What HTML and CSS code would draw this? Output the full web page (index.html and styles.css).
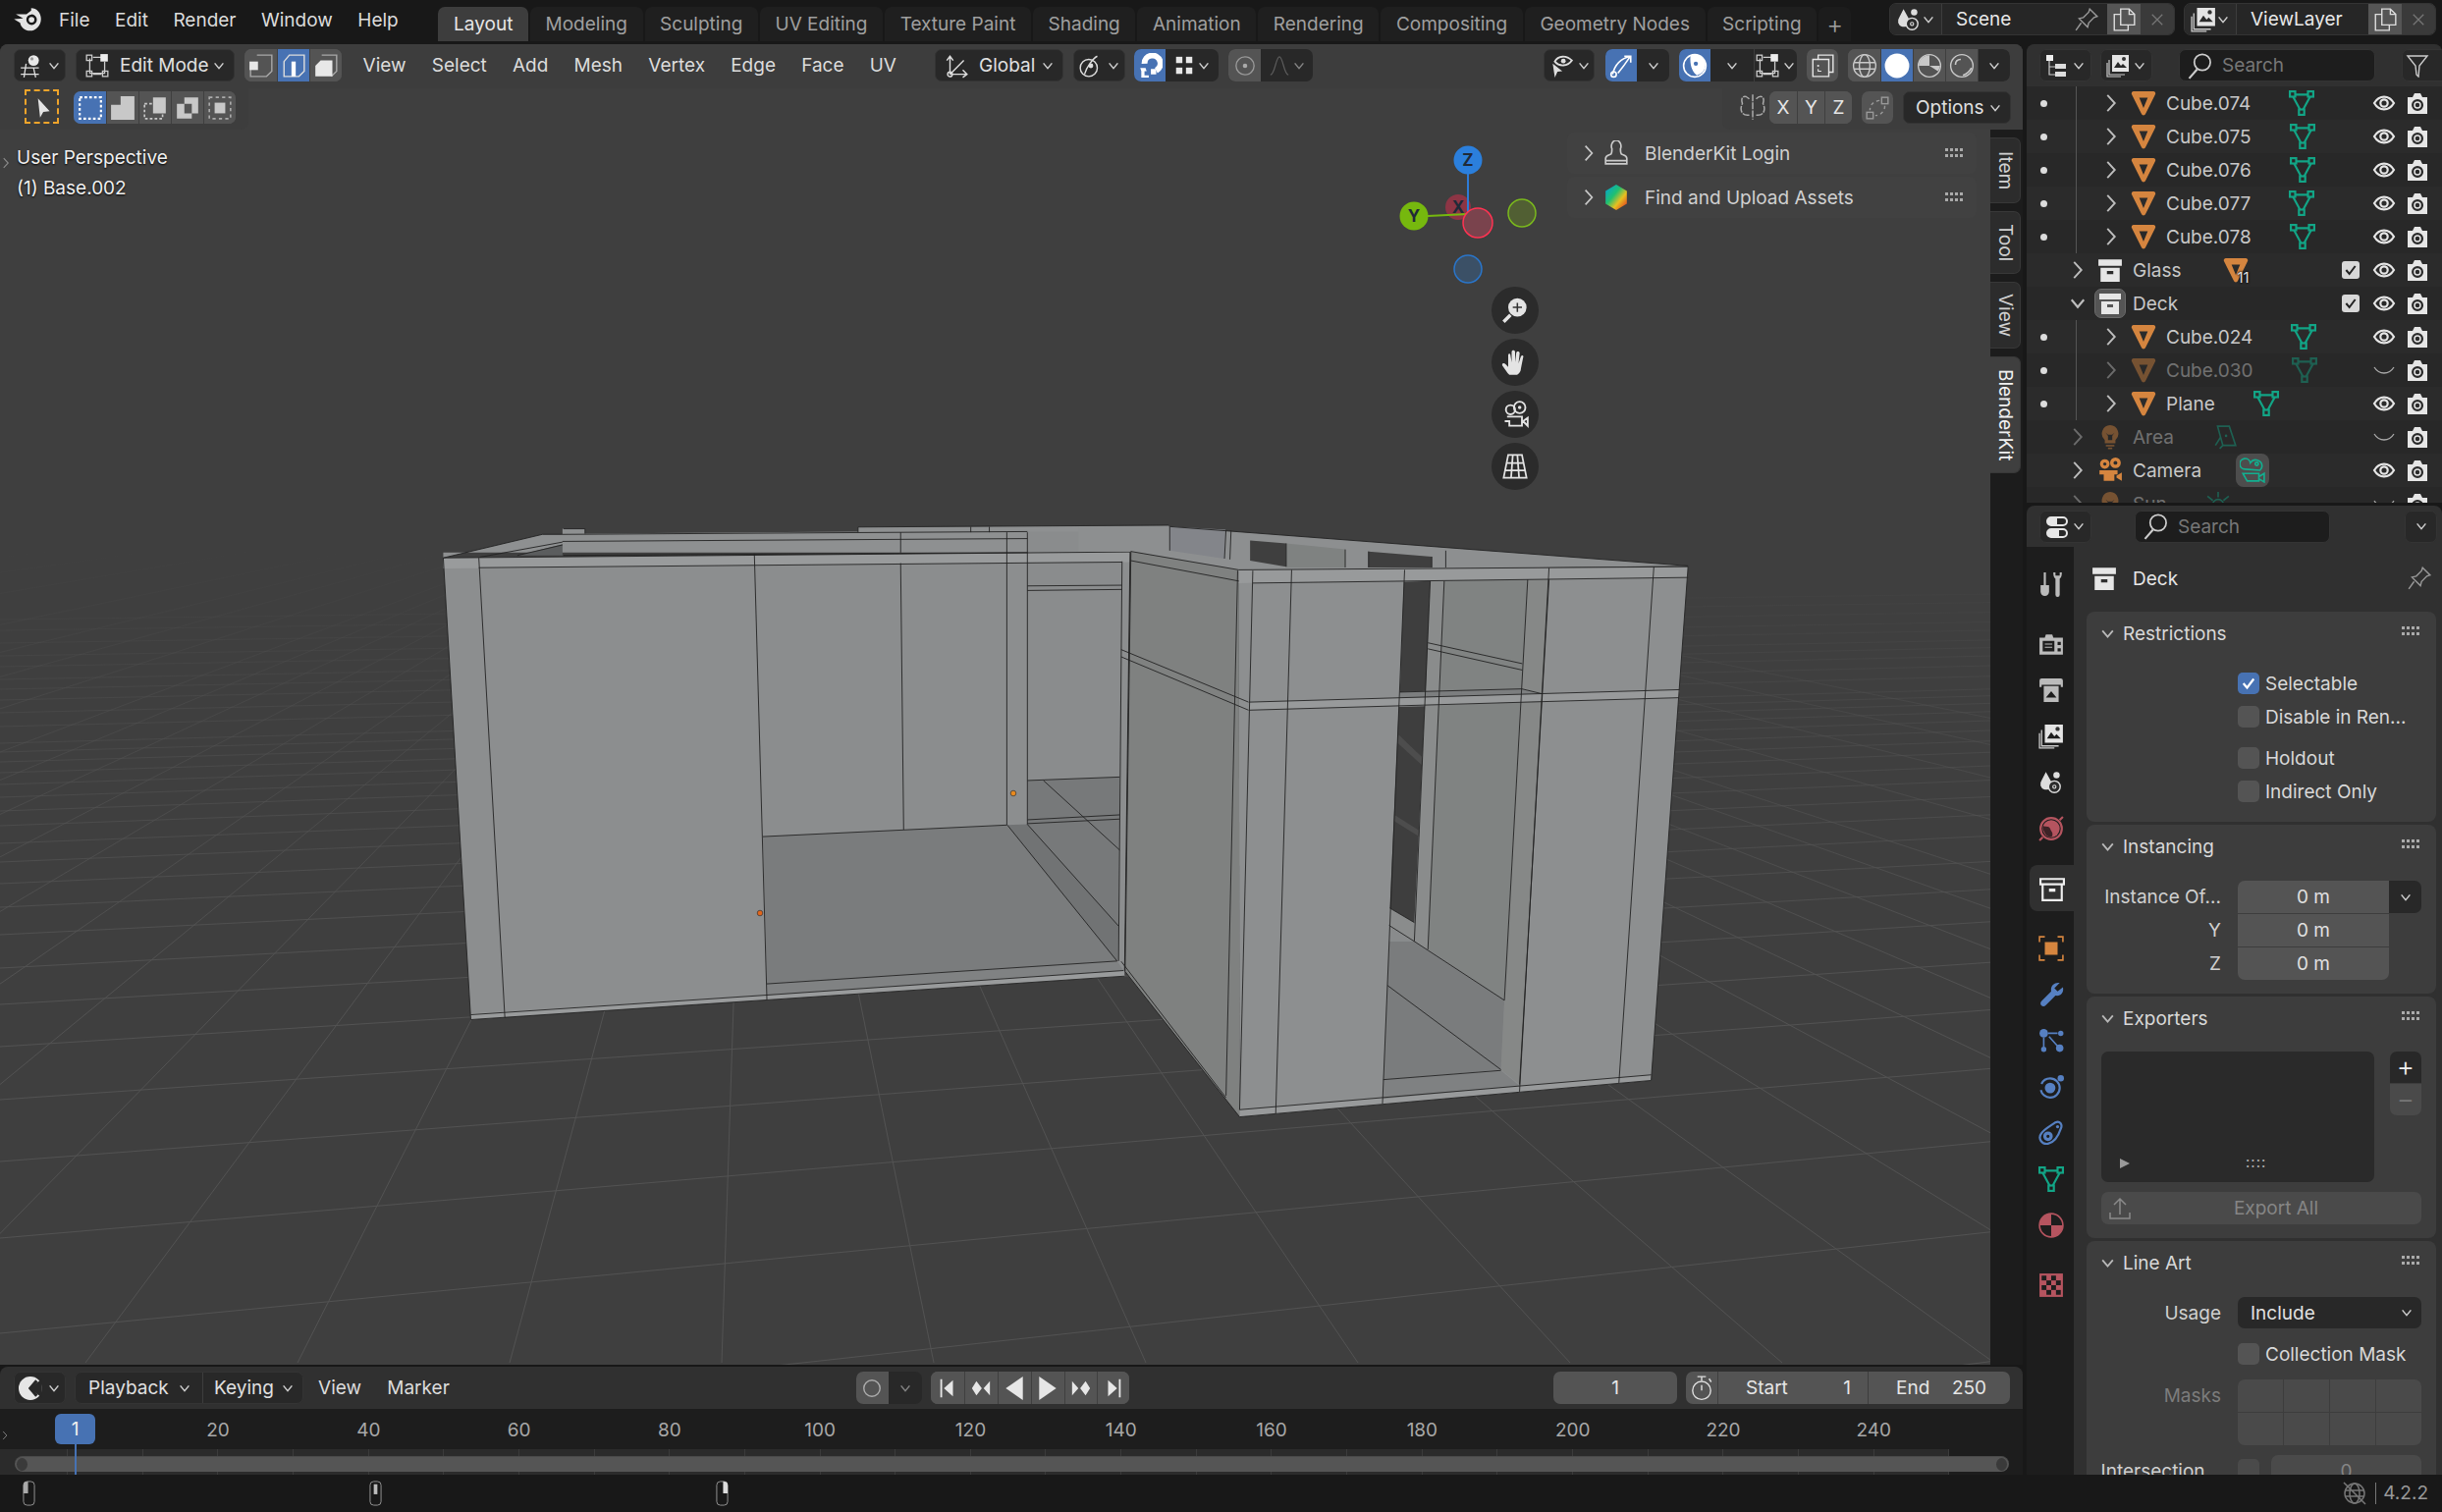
FILE: index.html
```html
<!DOCTYPE html>
<html lang="en">
<head>
<meta charset="utf-8">
<title>Blender 4.2.2</title>
<link rel="stylesheet" href="styles.css">
</head>
<body>
<svg class="defs" aria-hidden="true">
<defs>
<symbol id="logo" viewBox="0 0 24 24"><path fill="#e4e4e4" fill-rule="evenodd" d="M15 2.500c4.500 0 8 3.900 8 8.800 0 5.300-4 9.700-9 9.700-4.100 0-7.400-2.800-8-6.500L1 11.500 8.500 11 2.500 7.500h8.700L15 4.500zM15.300 7.700a4.300 4.300 0 1 0 .1 8.600 4.300 4.300 0 0 0-.1-8.600z"/><circle cx="15.300" cy="12" r="2.300" fill="#e4e4e4"/></symbol>
<symbol id="view3d" viewBox="0 0 24 24"><g fill="none" stroke="currentColor" stroke-width="1.200"><path d="M2 14h17M2 20h17M7 10l-2 13M14 14l2 9"/></g><circle cx="14" cy="7" r="5" fill="#e8e8e8"/><circle cx="12.500" cy="5.500" r="1.500" fill="#999"/></symbol>
<symbol id="editmode" viewBox="0 0 24 24"><g fill="none" stroke="#ccc" stroke-width="1.200"><path d="M5 5v14h14V8M8 4h8M8 20h8"/><rect x="2" y="2" width="5" height="5"/><rect x="2" y="17" width="5" height="5"/><rect x="17" y="17" width="5" height="5"/></g><rect x="15" y="1" width="7" height="7" fill="#eee"/></symbol>
<symbol id="vertsel" viewBox="0 0 24 24"><path fill="none" stroke="#a8a8a8" stroke-width="1.300" d="M8 2h14v15l-5 5H2V12"/><rect x="1" y="8" width="8" height="8" fill="#e8e8e8"/></symbol>
<symbol id="edgesel" viewBox="0 0 24 24"><path fill="none" stroke="#ddd" stroke-width="1.300" d="M8 2h14v15l-5 5H3V8z"/><rect x="10" y="8" width="4" height="14" fill="#fff"/></symbol>
<symbol id="facesel" viewBox="0 0 24 24"><path fill="none" stroke="#a8a8a8" stroke-width="1.300" d="M8 2h14v15l-5 5"/><path fill="#e8e8e8" d="M7 7h11v15H2V12z"/></symbol>
<symbol id="cursor" viewBox="0 0 24 24"><path fill="#e4e4e4" d="M8 4l11 12-6 .5L10 22z"/></symbol>
<symbol id="boxnew" viewBox="0 0 24 24"><rect x="2" y="2" width="20" height="20" fill="none" stroke="#fff" stroke-width="2" stroke-dasharray="2.500 2"/></symbol>
<symbol id="boxadd" viewBox="0 0 24 24"><path fill="#c8c8c8" d="M10 1h13v22H1V9h9z"/></symbol>
<symbol id="boxsub" viewBox="0 0 24 24"><path fill="#c8c8c8" d="M10 2h12v15H10z"/><rect x="2" y="8" width="17" height="14" fill="none" stroke="#c8c8c8" stroke-width="1.500" stroke-dasharray="2.500 2"/></symbol>
<symbol id="boxxor" viewBox="0 0 24 24"><path fill="#c8c8c8" fill-rule="evenodd" d="M9 2h13v15h-6v5H2V8h7zM9 8v9h7V8z"/></symbol>
<symbol id="boxand" viewBox="0 0 24 24"><rect x="2" y="2" width="20" height="20" fill="none" stroke="#aaa" stroke-width="1.500" stroke-dasharray="3 3"/><rect x="7" y="7" width="10" height="10" fill="#c8c8c8"/></symbol>
<symbol id="global" viewBox="0 0 24 24"><g fill="none" stroke="#ddd" stroke-width="1.300"><path d="M6 20V4M3 7l3-4 3 4M6 20h16M18 16l4 4-4 3M6 20L19 7"/><circle cx="6" cy="20" r="2.200"/></g></symbol>
<symbol id="pivot" viewBox="0 0 24 24"><g fill="none" stroke="#ddd" stroke-width="1.300"><circle cx="10" cy="14" r="8"/><path d="M18 3c-4 2-10 10-12 17"/></g><circle cx="12" cy="12" r="2.200" fill="#ddd"/></symbol>
<symbol id="magnet" viewBox="0 0 24 24"><path fill="none" stroke="#fff" stroke-width="5.500" d="M7 10a7.500 7.500 0 1 1 11 6.500"/><path fill="#fff" d="M3 14h5l1 3H7v4h4v2H4v-6z"/><path fill="#fff" d="M13 15h5v5h-5z"/></symbol>
<symbol id="snapgrid" viewBox="0 0 24 24"><g fill="#e8e8e8"><rect x="3" y="2" width="7" height="7"/><rect x="14" y="2" width="7" height="7"/><rect x="3" y="14" width="7" height="7"/><rect x="14" y="14" width="7" height="7"/></g></symbol>
<symbol id="prop" viewBox="0 0 24 24"><circle cx="12" cy="12" r="10" fill="none" stroke="#999" stroke-width="1.500"/><circle cx="12" cy="12" r="2.500" fill="#aaa"/></symbol>
<symbol id="falloff" viewBox="0 0 24 24"><path fill="none" stroke="#888" stroke-width="1.300" d="M2 22c5 0 6-20 10-20s5 20 10 20"/></symbol>
<symbol id="visi" viewBox="0 0 24 24"><path fill="none" stroke="#ddd" stroke-width="1.800" d="M6 8c3-6 11-6 16-1-4 6-12 6-16 1z"/><circle cx="14" cy="7.500" r="2.200" fill="#ddd"/><path fill="#ddd" d="M4 10l9 7-4.500.5L6 23z"/></symbol>
<symbol id="gizmo" viewBox="0 0 24 24"><g fill="none" stroke="#fff" stroke-width="1.500"><path d="M4 20C6 11 12 5 21 3M9 19C13 14 16 10 20 4M15 3h6v6"/><circle cx="5" cy="20" r="2.500"/></g></symbol>
<symbol id="overlay" viewBox="0 0 24 24"><circle cx="12" cy="12" r="10.500" fill="none" stroke="#fff" stroke-width="1.500"/><path fill="#fff" d="M8 2a10 10 0 0 1 14 10 10 10 0 0 1-8 9c-4-3-7-9-6-19z"/><circle cx="13" cy="10" r="2" fill="#4772b3"/></symbol>
<symbol id="xray" viewBox="0 0 24 24"><path fill="none" stroke="#e6e6e6" stroke-width="1.300" d="M8 6V2h14v16h-4M3 6h15v16H3z"/><circle cx="8" cy="12" r="1" fill="#e6e6e6"/><path stroke="#e6e6e6" fill="none" d="M8 15v2h3"/></symbol>
<symbol id="wire" viewBox="0 0 24 24"><g fill="none" stroke="#c8c8c8" stroke-width="1.300"><circle cx="12" cy="12" r="10.500"/><ellipse cx="12" cy="12" rx="5" ry="10.500"/><path d="M2 9h20M2 15h20"/></g></symbol>
<symbol id="solid" viewBox="0 0 24 24"><circle cx="12" cy="12" r="11.500" fill="#fff"/></symbol>
<symbol id="material" viewBox="0 0 24 24"><circle cx="12" cy="12" r="10.500" fill="none" stroke="#c8c8c8" stroke-width="1.300"/><path fill="#c8c8c8" d="M12 2A10 10 0 0 0 2 12h10l8 5a10 10 0 0 0 2-5H12z"/></symbol>
<symbol id="rendered" viewBox="0 0 24 24"><circle cx="12" cy="12" r="10.500" fill="none" stroke="#c8c8c8" stroke-width="1.300"/><path fill="none" stroke="#c8c8c8" stroke-width="1.500" d="M6 11c0-3 2-5 5-5M21 14c-2 4-5 6-8 7"/></symbol>
<symbol id="scene" viewBox="0 0 24 24"><path fill="#ddd" d="M7 2l5 9a5.500 5.500 0 0 1-2 7 5.500 5.500 0 0 1-8-3 6 6 0 0 1 1-5z"/><circle cx="17" cy="5" r="3" fill="#ddd"/><circle cx="15" cy="16" r="5.500" fill="#2b2b2b" stroke="#ddd" stroke-width="1.300"/><circle cx="15" cy="16" r="1.500" fill="none" stroke="#ddd"/></symbol>
<symbol id="pin" viewBox="0 0 24 24"><path fill="none" stroke="#999" stroke-width="1.300" d="M15 2l7 7-3 1-5 5-1 4-8-8 4-1 5-5zM7 15l-5 7"/></symbol>
<symbol id="copy" viewBox="0 0 24 24"><path fill="none" stroke="#ddd" stroke-width="1.300" d="M9 17V2h8l5 5v10zM17 2v5h5M9 7H3v15h13v-5"/></symbol>
<symbol id="close" viewBox="0 0 24 24"><path stroke="#777" stroke-width="1.600" d="M5 5l14 14M19 5L5 19"/></symbol>
<symbol id="layers" viewBox="0 0 24 24"><g fill="none" stroke="#ccc" stroke-width="1.200"><path d="M3 6v15h16M1 9v14h14"/></g><path fill="#e4e4e4" fill-rule="evenodd" d="M6 1h17v17H6zM8 14l4-6 3 4 2-2 4 4z"/><circle cx="18" cy="5" r="2" fill="#333"/></symbol>
<symbol id="outdisp" viewBox="0 0 24 24"><rect x="1" y="1" width="7" height="6" fill="#eee"/><path fill="none" stroke="#ccc" stroke-width="1.200" d="M4 7v14h6M4 13h6"/><rect x="10" y="10" width="11" height="5" fill="#ddd"/><rect x="10" y="18" width="11" height="5" fill="#ddd"/></symbol>
<symbol id="search" viewBox="0 0 24 24"><circle cx="14.500" cy="9" r="7" fill="none" stroke="#ccc" stroke-width="1.500"/><path stroke="#ccc" stroke-width="1.800" d="M10 15l-7 8"/></symbol>
<symbol id="filter" viewBox="0 0 24 24"><path fill="none" stroke="#ccc" stroke-width="1.400" d="M2 2h20l-8 10-1 11-2-2-1-9z"/></symbol>
<symbol id="meshobj" viewBox="0 0 24 24"><path fill="#d5853f" fill-rule="evenodd" d="M3 1h18a2 2 0 0 1 2 3l-9 18c-1 2-3 2-4 0L1 4a2 2 0 0 1 2-3zM8 7l4 9.500L16 7z"/></symbol>
<symbol id="meshdata" viewBox="0 0 24 24"><g fill="none" stroke="currentColor" stroke-width="2"><path d="M6 4h12M4 6l6.500 12M20 6l-6.500 12"/><rect x="1" y="1" width="5" height="5"/><rect x="18" y="1" width="5" height="5"/><rect x="9.500" y="18" width="5" height="5"/></g></symbol>
<symbol id="eye" viewBox="0 0 24 24"><path fill="none" stroke="#e6e6e6" stroke-width="2.200" d="M2 12c5-8.500 15-8.500 20 0-5 8.500-15 8.500-20 0z"/><circle cx="12" cy="12" r="3.700" fill="none" stroke="#e6e6e6" stroke-width="2.200"/></symbol>
<symbol id="eyeoff" viewBox="0 0 24 24"><path fill="none" stroke="#aaa" stroke-width="1.300" d="M2 9c5 8 15 8 20 0"/></symbol>
<symbol id="rcam" viewBox="0 0 24 24"><path fill="#e6e6e6" fill-rule="evenodd" d="M2 6h5l2-4h6l2 4h5v17H2zM12 8a6 6 0 1 0 .1 12A6 6 0 0 0 12 8z"/><circle cx="12" cy="14" r="3" fill="none" stroke="#e6e6e6" stroke-width="1.500"/></symbol>
<symbol id="check" viewBox="0 0 24 24"><path fill="none" stroke="currentColor" stroke-width="3" d="M5 12l5 6L19 6"/></symbol>
<symbol id="coll" viewBox="0 0 24 24"><path fill="#e6e6e6" fill-rule="evenodd" d="M1 2h22v6H1zM3 10h18v13H3zM9 13v3h6v-3z"/></symbol>
<symbol id="collout" viewBox="0 0 24 24"><path fill="none" stroke="#eee" stroke-width="2" d="M1 3h22v5H1zM3 8h18v15H3z"/><rect x="9" y="12" width="6" height="3" fill="#eee"/></symbol>
<symbol id="light" viewBox="0 0 24 24"><path fill="#d5853f" fill-rule="evenodd" d="M12 1a8 8 0 0 1 5 14v3H7v-3a8 8 0 0 1 5-14zM8 8l2 3v4h4v-4l2-3-2 2h-4z"/><rect x="8" y="19.500" width="8" height="1.500" fill="#d5853f"/><rect x="10" y="22" width="4" height="1.500" fill="#d5853f"/></symbol>
<symbol id="areadata" viewBox="0 0 24 24"><path fill="none" stroke="#12a586" stroke-width="1.500" d="M5 2h11l6 18H10zM10 20l-3 3M8 12l-5 8"/><circle cx="13" cy="11" r="1.200" fill="#12a586"/></symbol>
<symbol id="camobj" viewBox="0 0 24 24"><circle cx="7" cy="6" r="4.500" fill="#d5853f"/><circle cx="17" cy="5" r="5" fill="#d5853f"/><circle cx="7" cy="6" r="1.500" fill="#2b2b2b"/><circle cx="17" cy="5" r="1.800" fill="#2b2b2b"/><path fill="#d5853f" d="M2 12h17v4h-3v6H6v-6H2zM18 17l5-3v8l-5-3z"/></symbol>
<symbol id="camdata" viewBox="0 0 24 24"><g fill="none" stroke="#12b090" stroke-width="1.500"><path d="M5 11a5 5 0 1 1 5-6 6 6 0 0 1 11 3c0 2-1 3-2 4z"/><circle cx="16" cy="6" r="1.500"/><path d="M3 15h15v7H7zM18 18l5-3v8l-5-3"/></g></symbol>
<symbol id="sun" viewBox="0 0 24 24"><g fill="none" stroke="#12a586" stroke-width="1.500"><circle cx="12" cy="13" r="5"/><path d="M12 1v5M2 5l5 4M22 5l-5 4M1 14h5M18 14h5M5 22l3-4M19 22l-3-4"/></g></symbol>
<symbol id="sym" viewBox="0 0 24 24"><path fill="none" stroke="#aaa" stroke-width="1.300" stroke-dasharray="6 1" d="M12 1v22M9 5C5 1 1 3 3 9c-3 6 0 11 6 10M15 5c4-4 8-2 6 4 3 6 0 11-6 10"/></symbol>
<symbol id="autofill" viewBox="0 0 24 24"><g fill="none" stroke="#999" stroke-width="1.300"><rect x="16" y="2" width="6" height="6"/><rect x="2" y="16" width="6" height="6"/><path stroke-dasharray="3 3" d="M14 5C8 6 5 9 5 14M19 10c0 5-4 9-9 9"/></g></symbol>
<symbol id="grip" viewBox="0 0 20 10"><g fill="#aaa"><rect x="0" y="0" width="3" height="3"/><rect x="5" y="0" width="3" height="3"/><rect x="10" y="0" width="3" height="3"/><rect x="15" y="0" width="3" height="3"/><rect x="0" y="6" width="3" height="3"/><rect x="5" y="6" width="3" height="3"/><rect x="10" y="6" width="3" height="3"/><rect x="15" y="6" width="3" height="3"/></g></symbol>
<symbol id="user" viewBox="0 0 24 24"><path fill="none" stroke="#ccc" stroke-width="1.500" d="M8 8a4.500 5.500 0 1 1 8 0c0 3 0 4 1 5 2 1 5 1 5 4v5H2v-5c0-3 3-3 5-4 1-1 1-2 1-5zM2 19h20"/></symbol>
<linearGradient id="rainbow" x1="0" y1="0" x2="1" y2="1"><stop offset="0" stop-color="#00a0e0"/><stop offset=".4" stop-color="#20c070"/><stop offset=".65" stop-color="#e8c020"/><stop offset="1" stop-color="#e02020"/></linearGradient>
<symbol id="hex" viewBox="0 0 24 24"><path fill="url(#rainbow)" d="M12 0l10 6v12l-10 6-10-6V6z"/></symbol>
<symbol id="zoomin" viewBox="0 0 24 24"><circle cx="14" cy="9.500" r="8" fill="#e4e4e4"/><path stroke="#e4e4e4" stroke-width="3" d="M8 16l-6 6"/><path stroke="#333" stroke-width="1.300" d="M14 5.500v8M10 9.500h8"/></symbol>
<symbol id="hand" viewBox="0 0 24 24"><path fill="#e4e4e4" d="M7 23c-2-2-4-5-6-8-1-2 1-3 3-1l2 2V6c0-2 2-2 2 0l1 6V3c0-2 3-2 3 0v9l1-8c0-2 3-2 3 0l-1 9 2-6c1-2 3-1 2 1l-2 10c0 2-2 5-4 5z"/></symbol>
<symbol id="navcam" viewBox="0 0 24 24"><g fill="none" stroke="#e4e4e4" stroke-width="1.600"><circle cx="8" cy="8" r="4"/><circle cx="16" cy="6" r="5"/><path d="M5 14h13v8H7v-4H3M19 18l4-3v7z"/></g><circle cx="16" cy="6" r="1.500" fill="#e4e4e4"/></symbol>
<symbol id="ortho" viewBox="0 0 24 24"><g fill="none" stroke="#e4e4e4" stroke-width="1.500"><path d="M6 2h12l4 20H2zM4 9h16M3 15.500h18M10 2L8.500 22M14 2l1.500 20"/></g></symbol>
<symbol id="clock" viewBox="0 0 24 24"><circle cx="11" cy="12" r="11" fill="#e6e6e6"/><path fill="none" stroke="#282828" stroke-width="3" d="M17 5l-6 7 6 7"/><path fill="#282828" d="M22 3v18l-11-9z"/></symbol>
<symbol id="jumpstart" viewBox="0 0 24 24"><path fill="#e6e6e6" d="M4 2h2v20H4zM18 3v18L8 12z"/></symbol>
<symbol id="keyprev" viewBox="0 0 24 24"><path fill="#e6e6e6" d="M7 4l6 8-6 8-5-8zM22 4v16l-7-8z"/></symbol>
<symbol id="playrev" viewBox="0 0 24 24"><path fill="#e6e6e6" d="M20 1v22L4 12z"/></symbol>
<symbol id="play" viewBox="0 0 24 24"><path fill="#e6e6e6" d="M4 1v22l16-11z"/></symbol>
<symbol id="keynext" viewBox="0 0 24 24"><path fill="#e6e6e6" d="M17 4l5 8-5 8-6-8zM2 4v16l7-8z"/></symbol>
<symbol id="jumpend" viewBox="0 0 24 24"><path fill="#e6e6e6" d="M18 2h2v20h-2zM6 3v18l10-9z"/></symbol>
<symbol id="record" viewBox="0 0 24 24"><circle cx="12" cy="12" r="9" fill="none" stroke="#aaa" stroke-width="1.600"/></symbol>
<symbol id="timer" viewBox="0 0 24 24"><g fill="none" stroke="#ddd" stroke-width="1.300"><circle cx="12" cy="14" r="8.500"/><path d="M8 1h8M12 1v4M12 14V9M19 3l2 3"/></g></symbol>
<symbol id="mouseL" viewBox="0 0 14 28"><rect x="1" y="1" width="12" height="26" rx="4" fill="none" stroke="#999" stroke-width="1"/><path fill="#aaa" d="M1 5a4 4 0 0 1 4-4h1v13H1z"/></symbol>
<symbol id="mouseM" viewBox="0 0 14 28"><rect x="1" y="1" width="12" height="26" rx="4" fill="none" stroke="#999" stroke-width="1"/><rect x="5" y="4" width="4" height="11" fill="#bbb"/></symbol>
<symbol id="mouseR" viewBox="0 0 14 28"><rect x="1" y="1" width="12" height="26" rx="4" fill="none" stroke="#999" stroke-width="1"/><path fill="#ddd" d="M8 1h1a4 4 0 0 1 4 4v9H8z"/></symbol>
<symbol id="globeoff" viewBox="0 0 24 24"><g fill="none" stroke="#777" stroke-width="1.500"><circle cx="12" cy="12" r="10"/><ellipse cx="12" cy="12" rx="5" ry="10"/><path d="M2 9h20M2 15h20M1 1l22 22"/></g></symbol>
<symbol id="ptool" viewBox="0 0 24 24"><g fill="#bbb"><path d="M5 1h2v12H5z"/><path d="M2 13h8v6a4 4 0 0 1-8 0z"/><path d="M14 1c0 4 1 5 2 6V22a2 2 0 0 0 4 0V7c1-1 2-2 2-6l-2 0v3h-4V1z"/></g></symbol>
<symbol id="prender" viewBox="0 0 24 24"><path fill="#bbb" fill-rule="evenodd" d="M1 6h5l1-3h6l1 3h9v16H1zM4 9v10h11V9zM18 10v3h3v-3zM18 16v3h3v-3z"/><path stroke="#bbb" d="M6 12h7M6 15h7"/></symbol>
<symbol id="poutput" viewBox="0 0 24 24"><path fill="#bbb" fill-rule="evenodd" d="M3 1h18a2 2 0 0 1 2 2v6h-2V7H3v2H1V3a2 2 0 0 1 2-2zM5 8h14v15H5zM7 19l5-6 5 6z"/></symbol>
<symbol id="pworld" viewBox="0 0 24 24"><circle cx="12" cy="12" r="10" fill="none" stroke="#b5545f" stroke-width="2"/><circle cx="12" cy="12" r="8" fill="#b5545f"/><path fill="#3d2226" d="M4 9c3 2 6 0 7 3s3 3 2 7c-2 2-6 0-7-3-1-2-2-3-2-7z"/><path stroke="#b5545f" stroke-width="2" d="M1 23l3-3M23 1l-3 3"/></symbol>
<symbol id="pobject" viewBox="0 0 24 24"><rect x="6" y="6" width="12" height="12" fill="#d5853f"/><path fill="none" stroke="#d5853f" stroke-width="1.500" d="M1 6V1h5M18 1h5v5M23 18v5h-5M6 23H1v-5"/></symbol>
<symbol id="pmod" viewBox="0 0 24 24"><path fill="#5680c2" d="M20 1l-5 5 3 3 5-4c1 4-1 9-7 8L7 22c-3 3-7-1-4-4l9-9c-1-5 3-9 8-8z"/></symbol>
<symbol id="ppart" viewBox="0 0 24 24"><g fill="#5680c2"><circle cx="5" cy="5" r="4"/><circle cx="21" cy="5" r="2.500"/><circle cx="5" cy="20" r="2.500"/><circle cx="20" cy="19" r="3.500"/></g><path stroke="#5680c2" stroke-width="1.500" d="M9 5h9M5 9v9M10 8l8 9"/></symbol>
<symbol id="pphys" viewBox="0 0 24 24"><circle cx="11" cy="13" r="9" fill="none" stroke="#5680c2" stroke-width="2" stroke-dasharray="26 6"/><circle cx="11" cy="13" r="5" fill="#5680c2"/><circle cx="21" cy="4" r="3" fill="#5680c2"/></symbol>
<symbol id="pcons" viewBox="0 0 24 24"><path fill="none" stroke="#5680c2" stroke-width="2" d="M16 2c4-2 7 2 5 6-2 6-6 13-12 14C3 23-1 17 3 12c3-4 9-7 13-10z"/><circle cx="9" cy="15" r="3" fill="none" stroke="#5680c2" stroke-width="3"/><circle cx="18" cy="6" r="1.500" fill="#5680c2"/></symbol>
<symbol id="pmat" viewBox="0 0 24 24"><circle cx="12" cy="12" r="11" fill="#1d1d1d" stroke="#b5545f" stroke-width="1.500"/><path fill="#b5545f" d="M12 1A11 11 0 0 0 1 12h11zM12 12h11a11 11 0 0 1-11 11z"/></symbol>
<symbol id="ptex" viewBox="0 0 24 24"><rect x="1" y="1" width="22" height="22" fill="#b5545f"/><g fill="#1d1d1d"><rect x="3" y="3" width="4.500" height="4.500"/><rect x="12" y="3" width="4.500" height="4.500"/><rect x="7.500" y="7.500" width="4.500" height="4.500"/><rect x="16.500" y="7.500" width="4.500" height="4.500"/><rect x="3" y="12" width="4.500" height="4.500"/><rect x="12" y="12" width="4.500" height="4.500"/><rect x="7.500" y="16.500" width="4.500" height="4.500"/><rect x="16.500" y="16.500" width="4.500" height="4.500"/></g></symbol>
<symbol id="toggles" viewBox="0 0 24 24"><path fill="#e6e6e6" fill-rule="evenodd" d="M6 2h12a5 5 0 0 1 0 10H6A5 5 0 0 1 6 2zM12 4v6h6a3 3 0 0 0 0-6zM6 14h12a5 5 0 0 1 0 10H6a5 5 0 0 1 0-10zM14 16v6h4a3 3 0 0 0 0-6z"/></symbol>
<symbol id="export" viewBox="0 0 24 24"><path fill="none" stroke="#8a8a8a" stroke-width="1.500" d="M12 18V2M6 8l6-6 6 6M2 16v6h20v-6"/></symbol>
<symbol id="chevd" viewBox="0 0 16 16"><path fill="none" stroke="currentColor" stroke-width="1.700" d="M3 5l5 6 5-6"/></symbol>
<symbol id="chevr" viewBox="0 0 16 16"><path fill="none" stroke="currentColor" stroke-width="1.500" d="M5 1.500l6 6.500-6 6.500"/></symbol>
</defs>
</svg>

<div class="app">
  <header class="topbar">
    <div class="logo"><svg class="ic30"><use href="#logo"/></svg></div>
    <nav class="menus">
      <span class="menu">File</span><span class="menu">Edit</span><span class="menu">Render</span><span class="menu">Window</span><span class="menu">Help</span>
    </nav>
    <nav class="tabs">
      <span class="tab active">Layout</span><span class="tab">Modeling</span><span class="tab">Sculpting</span><span class="tab">UV Editing</span><span class="tab">Texture Paint</span><span class="tab">Shading</span><span class="tab">Animation</span><span class="tab">Rendering</span><span class="tab">Compositing</span><span class="tab">Geometry Nodes</span><span class="tab">Scripting</span><span class="tab tab-add">+</span>
    </nav>
    <div class="datablock scene-block">
      <span class="db-icon"><svg class="ic26"><use href="#scene"/></svg><svg class="chev"><use href="#chevd"/></svg></span>
      <span class="db-name">Scene</span>
      <svg class="ic26 db-pin"><use href="#pin"/></svg>
      <span class="db-copy"><svg class="ic26"><use href="#copy"/></svg></span>
      <span class="db-x"><svg class="ic18"><use href="#close"/></svg></span>
    </div>
    <div class="datablock layer-block">
      <span class="db-icon"><svg class="ic26"><use href="#layers"/></svg><svg class="chev"><use href="#chevd"/></svg></span>
      <span class="db-name">ViewLayer</span>
      <span class="db-copy"><svg class="ic26"><use href="#copy"/></svg></span>
      <span class="db-x"><svg class="ic18"><use href="#close"/></svg></span>
    </div>
  </header>

  <div class="workspace">
    <div class="left-col">
      <main class="viewport">
        <svg class="canvas" viewBox="0 45 2060 1345" xmlns="http://www.w3.org/2000/svg">
          <defs>
            <linearGradient id="gridfade" gradientUnits="userSpaceOnUse" x1="0" y1="560" x2="0" y2="1000"><stop offset="0" stop-color="#515151" stop-opacity="0"/><stop offset=".35" stop-color="#515151" stop-opacity=".45"/><stop offset="1" stop-color="#525252"/></linearGradient>
          </defs>
          <path fill="none" stroke="url(#gridfade)" stroke-width="1" d="M0 1650L8700 520M0 1478L8700 520M0 1358L8700 520M0 1261L8700 520M0 1183L8700 520M0 1120L8700 520M0 1066L8700 520M0 1023L8700 520M0 986L8700 520M0 952L8700 520M0 924L8700 520M0 900L8700 520M0 878L8700 520M0 859L8700 520M0 841L8700 520M0 826L8700 520M0 812L8700 520M0 799L8700 520M0 787L8700 520M0 776L8700 520M0 766L8700 520M0 757L8700 520M0 740L8700 520M0 726L8700 520M0 713L8700 520M0 702L8700 520M0 692L8700 520M0 679L8700 520M0 668L8700 520M0 655L8700 520M0 642L8700 520M0 631L8700 520"/>
          <path fill="none" stroke="url(#gridfade)" stroke-width="1" d="M-7905 1388L765 476M-6825 1388L765 476M-5745 1388L765 476M-4665 1388L765 476M-3585 1388L765 476M-2937 1388L765 476M-2505 1388L765 476M-2073 1388L765 476M-1641 1388L765 476M-1425 1388L765 476M-1209 1388L765 476M-993 1388L765 476M-777 1388L765 476M-561 1388L765 476M-345 1388L765 476M-129 1388L765 476M87 1388L765 476M303 1388L765 476M519 1388L765 476M735 1388L765 476M951 1388L765 476M1167 1388L765 476M1383 1388L765 476M1599 1388L765 476M1815 1388L765 476M2031 1388L765 476M2247 1388L765 476M2463 1388L765 476M2679 1388L765 476M2895 1388L765 476M3111 1388L765 476M3327 1388L765 476M3543 1388L765 476M3975 1388L765 476M4407 1388L765 476M4839 1388L765 476M5271 1388L765 476"/>

          <g transform="translate(430 520) scale(.5102 .3571)">
            <path fill="#8e9091" d="M42 135L240 68H280V52H325V66L870 60V47L1490 42V120H42z"/>
            <path fill="#5b5d5e" d="M190 128L280 96V128z"/>
            <path fill="#8a8c8d" d="M1208 60H1490V118L1413 118 1208 122z"/>
            <path fill="#8c8e8f" d="M42 135L1413 118 1402 1328 97 1452z"/>
            <path fill="#8b8d8e" d="M663 150L1167 145V897L680 930z"/>
            <path fill="#8a8c8d" d="M1208 147H1397V762L1208 772z"/>
            <path fill="#77797a" d="M1208 770L1392 760 1390 1285H1208z"/>
            <path fill="#7a7c7d" d="M680 930L1167 897 1387 1285 688 1350z"/>
            <path fill="#717374" d="M1167 897L1208 895 1390 1185 1387 1285z"/>
            <path fill="#808283" d="M688 1350L1387 1285 1400 1312 688 1382z"/>
            <path fill="#999b9c" d="M97 1435L688 1382 1400 1312 1402 1328 97 1452z"/>
            <path fill="#999b9c" d="M42 135L1413 118 1412 147 42 165z"/>
            <path fill="none" stroke="#232323" stroke-width=".9" vector-effect="non-scaling-stroke" d="M42 135L97 1452M113 135L165 1447M663 123L688 1395M955 150L961 910M1167 62V897M1208 62V895M1397 145L1390 1285M1413 118L1402 1312M42 135L1413 118M113 163L1397 147M1208 215L1397 213M1208 228L1397 225M1208 770L1392 760M1208 882L1392 868M1208 893L1392 880M1240 770L1392 968M680 930L1167 897M688 1350L1387 1285M97 1438L688 1382 1400 1312M97 1452L1402 1328M1168 897L1387 1285M1208 895L1390 1185M42 135L240 68H280M115 133L280 90M190 128L280 98M280 68L1208 60M280 88L1208 80M282 128L1208 120M955 62V120M282 52H325V66M870 47L1490 42M870 47V62M1095 46V62M1132 46V62"/>
          </g>
          <circle cx="774" cy="930" r="2.800" fill="#e2651a" stroke="#333" stroke-width=".7"/>
          <circle cx="1032" cy="808" r="2.800" fill="#e98a1f" stroke="#333" stroke-width=".7"/>

          <g transform="translate(1130 520) scale(.3954 .4082)">
            <path fill="#8d8f90" d="M-80 42L155 40 1490 138 333 150 55 102H-80z"/>
            <path fill="#83858a" d="M155 40L300 48 296 120 155 100z"/>
            <path fill="#3f3f3f" d="M362 75L455 82V140L362 125z"/>
            <path fill="#7f8281" d="M455 82L607 97V142H455z"/>
            <path fill="#3f3f3f" d="M667 102L830 115V142H667z"/>
            <path fill="#7f8180" d="M55 102L333 148 335 1513 40 1150z"/>
            <path fill="#8d8f90" d="M333 148L1490 140 1395 1422 335 1513z"/>
            <path fill="#989a9b" d="M333 148L1490 140 1489 168 333 181zM360 478L1468 447 1466 467 360 498zM335 1495L1395 1408V1422L335 1513z"/>
            <path fill="#3e3e3e" d="M758 178L826 176 815 450 748 453zM745 490L812 488 785 1028 722 992z"/>
            <path fill="#4d4d4d" d="M745 560L810 620V640L742 580zM735 760L800 800V815L733 775z"/>
            <path fill="#8a8c8c" d="M826 176H862L851 450H815zM812 488L848 486 820 1095 785 1075z"/>
            <path fill="#808382" d="M862 176L1077 172 1063 445 851 450zM848 486L1058 478 1017 1222 820 1095z"/>
            <path fill="#868887" d="M1077 172H1132L1113 455 1063 445zM1058 478L1113 476 1056 1432 1008 1395z"/>
            <path fill="#8a8c8c" d="M722 992L785 1028V1075L720 1035z"/>
            <path fill="#7a7c7d" d="M720 1075H785L1017 1222 1008 1395 705 1420z"/>
            <path fill="#898b8c" d="M720 1035L785 1075H720z"/>
            <path fill="#7f8182" d="M705 1420L1008 1397 1056 1435 703 1468z"/>
            <path fill="#7c7e7f" d="M748 453L1062 445 1113 457 748 468z"/>
            <path fill="none" stroke="#232323" stroke-width=".9" vector-effect="non-scaling-stroke" d="M155 40L1490 138M155 40V100M300 48L296 120M313 50L310 122M55 102L333 148M55 125L333 176M30 347L358 478M30 365L358 498M330 150L300 1460M55 102L40 1150M40 1150L335 1513M30 1125L300 1465M333 148L1490 140M369 181L1490 167M360 478L1468 447M360 498L1466 467M335 1495L1395 1408M335 1513L1395 1422M369 150L335 1495M469 148L428 1505M760 148L703 1480M1132 143L1056 1450M1402 140L1312 1428M1490 140L1395 1422M826 176L785 1075M862 176L820 1095M1077 172L1017 1222M1132 172L1056 1432M820 330L1063 382M820 345L1063 398M785 1075L1017 1222M716 1185L1008 1395M705 1420L1008 1397M722 992L785 1028M720 1035L785 1075M748 453L1062 445 1113 457M455 82V140M607 97V142M667 102V142M830 115V142M866 100V142"/>
          </g>

          <g class="gizmo">
            <circle cx="1485" cy="211" r="13" fill="#8d3545"/>
            <text x="1485" y="217" class="gz-t">X</text>
            <path stroke="#2d7bd6" stroke-width="2" d="M1495 177V218"/>
            <path stroke="#76b80e" stroke-width="2" d="M1454 220L1495 218"/>
            <circle cx="1505" cy="227" r="15" fill="#7a434d" stroke="#ff3352" stroke-width="1.500"/>
            <circle cx="1550" cy="217" r="14" fill="#515f33" stroke="#7ab81d" stroke-width="1.500"/>
            <circle cx="1495" cy="274" r="14" fill="#3b5066" stroke="#2a75c9" stroke-width="1.500"/>
            <circle cx="1495" cy="163" r="14.500" fill="#2b7fdc"/>
            <text x="1495" y="169" class="gz-t">Z</text>
            <circle cx="1440" cy="220" r="14.500" fill="#76b80e"/>
            <text x="1440" y="226" class="gz-t">Y</text>
          </g>
        </svg>

        <div class="vp-header">
          <span class="hbtn w53"><svg class="ic26"><use href="#view3d"/></svg><svg class="chev"><use href="#chevd"/></svg></span>
          <span class="hbtn w162 ml10"><svg class="ic26"><use href="#editmode"/></svg><span class="hbtn-label">Edit Mode</span><svg class="chev"><use href="#chevd"/></svg></span>
          <span class="seg ml10">
            <span class="seg-item w33"><svg class="ic26"><use href="#vertsel"/></svg></span><span class="seg-item w33 on"><svg class="ic26"><use href="#edgesel"/></svg></span><span class="seg-item w33"><svg class="ic26"><use href="#facesel"/></svg></span>
          </span>
          <nav class="hmenu ml8">
            <span class="menu">View</span><span class="menu">Select</span><span class="menu">Add</span><span class="menu">Mesh</span><span class="menu">Vertex</span><span class="menu">Edge</span><span class="menu">Face</span><span class="menu">UV</span>
          </nav>
          <span class="hbtn w131 ml26"><svg class="ic26"><use href="#global"/></svg><span class="hbtn-label">Global</span><svg class="chev"><use href="#chevd"/></svg></span>
          <span class="hbtn w53 ml10"><svg class="ic26"><use href="#pivot"/></svg><svg class="chev"><use href="#chevd"/></svg></span>
          <span class="split w86 ml9"><span class="split-on w32"><svg class="ic26"><use href="#magnet"/></svg></span><span class="split-rest"><svg class="ic22"><use href="#snapgrid"/></svg><svg class="chev"><use href="#chevd"/></svg></span></span>
          <span class="split w86 ml10"><span class="split-grey w33"><svg class="ic22"><use href="#prop"/></svg></span><span class="split-rest dim"><svg class="ic22"><use href="#falloff"/></svg><svg class="chev"><use href="#chevd"/></svg></span></span>

          <span class="hbtn w52 push"><svg class="ic26"><use href="#visi"/></svg><svg class="chev"><use href="#chevd"/></svg></span>
          <span class="split w65 ml11"><span class="split-on w32"><svg class="ic26"><use href="#gizmo"/></svg></span><span class="split-rest"><svg class="chev"><use href="#chevd"/></svg></span></span>
          <span class="split w120 ml10"><span class="split-on w32"><svg class="ic26"><use href="#overlay"/></svg></span><span class="split-rest w35"><svg class="chev"><use href="#chevd"/></svg></span><span class="split-rest w53 bl"><svg class="ic26"><use href="#editmode"/></svg><svg class="chev"><use href="#chevd"/></svg></span></span>
          <span class="seg ml10"><span class="seg-item w32"><svg class="ic26"><use href="#xray"/></svg></span></span>
          <span class="seg ml10"><span class="seg-item w33"><svg class="ic26"><use href="#wire"/></svg></span><span class="seg-item w33 on"><svg class="ic26"><use href="#solid"/></svg></span><span class="seg-item w33"><svg class="ic26"><use href="#material"/></svg></span><span class="seg-item w33"><svg class="ic26"><use href="#rendered"/></svg></span><span class="seg-item w33 dark"><svg class="chev"><use href="#chevd"/></svg></span></span>
        </div>

        <div class="vp-tool">
          <div class="tool-left">
            <span class="tool-active"><svg class="ic26"><use href="#cursor"/></svg></span>
            <span class="seg ml15">
              <span class="seg-item w33 on"><svg class="ic26"><use href="#boxnew"/></svg></span><span class="seg-item w33"><svg class="ic26"><use href="#boxadd"/></svg></span><span class="seg-item w33"><svg class="ic26"><use href="#boxsub"/></svg></span><span class="seg-item w33"><svg class="ic26"><use href="#boxxor"/></svg></span><span class="seg-item w33"><svg class="ic26"><use href="#boxand"/></svg></span>
            </span>
          </div>
          <div class="tool-right">
            <svg class="ic28 symm"><use href="#sym"/></svg>
            <span class="seg"><span class="seg-item w28 txt">X</span><span class="seg-item w28 txt">Y</span><span class="seg-item w28 txt">Z</span></span>
            <span class="seg ml10"><span class="seg-item w32"><svg class="ic26"><use href="#autofill"/></svg></span></span>
            <span class="hbtn w110 ml10"><span class="hbtn-label">Options</span><svg class="chev"><use href="#chevd"/></svg></span>
          </div>
        </div>

        <div class="vp-info">
          <div>User Perspective</div>
          <div>(1) Base.002</div>
        </div>
        <svg class="area-toggle"><use href="#chevr"/></svg>

        <div class="nav-buttons">
          <span class="nav-btn"><svg class="ic28"><use href="#zoomin"/></svg></span>
          <span class="nav-btn"><svg class="ic28"><use href="#hand"/></svg></span>
          <span class="nav-btn"><svg class="ic28"><use href="#navcam"/></svg></span>
          <span class="nav-btn"><svg class="ic28"><use href="#ortho"/></svg></span>
        </div>

        <div class="n-panels">
          <div class="n-panel"><svg class="chev-r"><use href="#chevr"/></svg><svg class="ic26"><use href="#user"/></svg><span class="n-title">BlenderKit Login</span><svg class="grip"><use href="#grip"/></svg></div>
          <div class="n-panel"><svg class="chev-r"><use href="#chevr"/></svg><svg class="ic26"><use href="#hex"/></svg><span class="n-title">Find and Upload Assets</span><svg class="grip"><use href="#grip"/></svg></div>
        </div>

        <aside class="n-tabs">
          <span class="n-tab h67">Item</span>
          <span class="n-tab h64">Tool</span>
          <span class="n-tab h68">View</span>
          <span class="n-tab h119 active">BlenderKit</span>
        </aside>
      </main>

      <section class="timeline">
        <div class="tl-header">
          <span class="hbtn w53"><svg class="ic26"><use href="#clock"/></svg><svg class="chev"><use href="#chevd"/></svg></span>
          <span class="hbtn gap0 ml9"><span class="tl-drop w126">Playback<svg class="chev"><use href="#chevd"/></svg></span><span class="tl-drop w102 bl">Keying<svg class="chev"><use href="#chevd"/></svg></span></span>
          <nav class="hmenu ml2"><span class="menu">View</span><span class="menu">Marker</span></nav>
          <span class="split w67 ml401"><span class="split-grey w33"><svg class="ic22"><use href="#record"/></svg></span><span class="split-rest dim"><svg class="chev"><use href="#chevd"/></svg></span></span>
          <span class="seg ml9"><span class="seg-item w34"><svg class="ic22"><use href="#jumpstart"/></svg></span><span class="seg-item w34"><svg class="ic22"><use href="#keyprev"/></svg></span><span class="seg-item w34"><svg class="ic26"><use href="#playrev"/></svg></span><span class="seg-item w34"><svg class="ic26"><use href="#play"/></svg></span><span class="seg-item w33"><svg class="ic22"><use href="#keynext"/></svg></span><span class="seg-item w33"><svg class="ic22"><use href="#jumpend"/></svg></span></span>
          <span class="frame push">1</span>
          <span class="range ml9"><span class="range-ic"><svg class="ic26"><use href="#timer"/></svg></span><span class="range-f w152"><span>Start</span><span>1</span></span><span class="range-f w145 bl"><span>End</span><span>250</span></span></span>
        </div>
        <div class="ruler">
          <span class="rn">20</span><span class="rn">40</span><span class="rn">60</span><span class="rn">80</span><span class="rn">100</span><span class="rn">120</span><span class="rn">140</span><span class="rn">160</span><span class="rn">180</span><span class="rn">200</span><span class="rn">220</span><span class="rn">240</span>
          <span class="playhead">1</span>
        </div>
        <div class="tracks"><div class="scrollbar"></div></div>
        <svg class="tl-toggle-l"><use href="#chevr"/></svg>
      </section>
    </div>

    <div class="right-col">
      <section class="outliner">
        <div class="ol-header">
          <span class="hbtn w53"><svg class="ic24"><use href="#outdisp"/></svg><svg class="chev"><use href="#chevd"/></svg></span>
          <span class="hbtn w53 ml9"><svg class="ic24"><use href="#layers"/></svg><svg class="chev"><use href="#chevd"/></svg></span>
          <span class="search ol-search"><svg class="ic28"><use href="#search"/></svg><span>Search</span></span>
          <span class="hbtn ol-filter"><svg class="ic24"><use href="#filter"/></svg></span>
        </div>
        <div class="ol-rows">
          <div class="row odd child"><span class="dot"></span><svg class="twist"><use href="#chevr"/></svg><svg class="oic"><use href="#meshobj"/></svg><span class="name">Cube.074</span><svg class="dic"><use href="#meshdata"/></svg><span class="rctl"><svg class="ctl"><use href="#eye"/></svg><svg class="ctl"><use href="#rcam"/></svg></span></div>
          <div class="row child"><span class="dot"></span><svg class="twist"><use href="#chevr"/></svg><svg class="oic"><use href="#meshobj"/></svg><span class="name">Cube.075</span><svg class="dic"><use href="#meshdata"/></svg><span class="rctl"><svg class="ctl"><use href="#eye"/></svg><svg class="ctl"><use href="#rcam"/></svg></span></div>
          <div class="row odd child"><span class="dot"></span><svg class="twist"><use href="#chevr"/></svg><svg class="oic"><use href="#meshobj"/></svg><span class="name">Cube.076</span><svg class="dic"><use href="#meshdata"/></svg><span class="rctl"><svg class="ctl"><use href="#eye"/></svg><svg class="ctl"><use href="#rcam"/></svg></span></div>
          <div class="row child"><span class="dot"></span><svg class="twist"><use href="#chevr"/></svg><svg class="oic"><use href="#meshobj"/></svg><span class="name">Cube.077</span><svg class="dic"><use href="#meshdata"/></svg><span class="rctl"><svg class="ctl"><use href="#eye"/></svg><svg class="ctl"><use href="#rcam"/></svg></span></div>
          <div class="row odd child"><span class="dot"></span><svg class="twist"><use href="#chevr"/></svg><svg class="oic"><use href="#meshobj"/></svg><span class="name">Cube.078</span><svg class="dic"><use href="#meshdata"/></svg><span class="rctl"><svg class="ctl"><use href="#eye"/></svg><svg class="ctl"><use href="#rcam"/></svg></span></div>
          <div class="row"><svg class="twist"><use href="#chevr"/></svg><svg class="oic"><use href="#coll"/></svg><span class="name">Glass</span><span class="sub"><svg class="dic"><use href="#meshobj"/></svg><span class="sub-n">11</span></span><span class="rctl"><span class="olcheck"><svg><use href="#check"/></svg></span><svg class="ctl"><use href="#eye"/></svg><svg class="ctl"><use href="#rcam"/></svg></span></div>
          <div class="row odd"><svg class="twist"><use href="#chevd"/></svg><span class="oic-hl"><svg class="oic"><use href="#coll"/></svg></span><span class="name">Deck</span><span class="rctl"><span class="olcheck"><svg><use href="#check"/></svg></span><svg class="ctl"><use href="#eye"/></svg><svg class="ctl"><use href="#rcam"/></svg></span></div>
          <div class="row child"><span class="dot"></span><svg class="twist"><use href="#chevr"/></svg><svg class="oic"><use href="#meshobj"/></svg><span class="name">Cube.024</span><svg class="dic"><use href="#meshdata"/></svg><span class="rctl"><svg class="ctl"><use href="#eye"/></svg><svg class="ctl"><use href="#rcam"/></svg></span></div>
          <div class="row odd child"><span class="dot"></span><svg class="twist faded"><use href="#chevr"/></svg><svg class="oic faded"><use href="#meshobj"/></svg><span class="name faded">Cube.030</span><svg class="dic faded"><use href="#meshdata"/></svg><span class="rctl"><svg class="ctl"><use href="#eyeoff"/></svg><svg class="ctl"><use href="#rcam"/></svg></span></div>
          <div class="row child"><span class="dot"></span><svg class="twist"><use href="#chevr"/></svg><svg class="oic"><use href="#meshobj"/></svg><span class="name">Plane</span><svg class="dic"><use href="#meshdata"/></svg><span class="rctl"><svg class="ctl"><use href="#eye"/></svg><svg class="ctl"><use href="#rcam"/></svg></span></div>
          <div class="row odd"><svg class="twist faded"><use href="#chevr"/></svg><svg class="oic faded"><use href="#light"/></svg><span class="name faded">Area</span><svg class="dic faded"><use href="#areadata"/></svg><span class="rctl"><svg class="ctl"><use href="#eyeoff"/></svg><svg class="ctl"><use href="#rcam"/></svg></span></div>
          <div class="row"><svg class="twist"><use href="#chevr"/></svg><svg class="oic"><use href="#camobj"/></svg><span class="name">Camera</span><span class="dic-hl"><svg class="dic"><use href="#camdata"/></svg></span><span class="rctl"><svg class="ctl"><use href="#eye"/></svg><svg class="ctl"><use href="#rcam"/></svg></span></div>
          <div class="row odd"><svg class="twist faded"><use href="#chevr"/></svg><svg class="oic faded"><use href="#light"/></svg><span class="name faded">Sun</span><svg class="dic faded"><use href="#sun"/></svg><span class="rctl"><svg class="ctl"><use href="#eyeoff"/></svg><svg class="ctl"><use href="#rcam"/></svg></span></div>
        </div>
      </section>

      <section class="properties">
        <div class="pr-header">
          <span class="hbtn w53"><svg class="ic24"><use href="#toggles"/></svg><svg class="chev"><use href="#chevd"/></svg></span>
          <span class="search pr-search"><svg class="ic28"><use href="#search"/></svg><span>Search</span></span>
          <span class="hbtn pr-opt"><svg class="chev"><use href="#chevd"/></svg></span>
        </div>
        <div class="pr-body">
          <nav class="pr-nav">
            <span class="pn"><svg class="ic26"><use href="#ptool"/></svg></span>
            <span class="pn gap14"><svg class="ic26"><use href="#prender"/></svg></span>
            <span class="pn"><svg class="ic26"><use href="#poutput"/></svg></span>
            <span class="pn"><svg class="ic26"><use href="#layers"/></svg></span>
            <span class="pn"><svg class="ic26"><use href="#scene"/></svg></span>
            <span class="pn"><svg class="ic26"><use href="#pworld"/></svg></span>
            <span class="pn gap14 on"><svg class="ic26"><use href="#collout"/></svg></span>
            <span class="pn gap14"><svg class="ic26"><use href="#pobject"/></svg></span>
            <span class="pn"><svg class="ic26"><use href="#pmod"/></svg></span>
            <span class="pn"><svg class="ic26"><use href="#ppart"/></svg></span>
            <span class="pn"><svg class="ic26"><use href="#pphys"/></svg></span>
            <span class="pn"><svg class="ic26"><use href="#pcons"/></svg></span>
            <span class="pn pn-data"><svg class="ic26"><use href="#meshdata"/></svg></span>
            <span class="pn"><svg class="ic26"><use href="#pmat"/></svg></span>
            <span class="pn gap14"><svg class="ic26"><use href="#ptex"/></svg></span>
          </nav>
          <div class="pr-main">
            <div class="pr-title"><svg class="ic26"><use href="#coll"/></svg><span class="pr-name">Deck</span><svg class="ic26 pr-pin"><use href="#pin"/></svg></div>

            <div class="panel p-restrict">
              <div class="panel-h"><svg class="pchev"><use href="#chevd"/></svg><span>Restrictions</span><svg class="grip"><use href="#grip"/></svg></div>
              <div class="cb-col">
                <label class="cb"><span class="box on"><svg><use href="#check"/></svg></span>Selectable</label>
                <label class="cb"><span class="box"></span>Disable in Ren...</label>
                <label class="cb mt8"><span class="box"></span>Holdout</label>
                <label class="cb"><span class="box"></span>Indirect Only</label>
              </div>
            </div>

            <div class="panel p-inst">
              <div class="panel-h"><svg class="pchev"><use href="#chevd"/></svg><span>Instancing</span><svg class="grip"><use href="#grip"/></svg></div>
              <div class="inst-grid">
                <span class="lbl">Instance Of...</span><span class="num first">0 m</span><span class="num-drop"><svg class="chev"><use href="#chevd"/></svg></span>
                <span class="lbl">Y</span><span class="num">0 m</span><span></span>
                <span class="lbl">Z</span><span class="num last">0 m</span><span></span>
              </div>
            </div>

            <div class="panel p-exp">
              <div class="panel-h"><svg class="pchev"><use href="#chevd"/></svg><span>Exporters</span><svg class="grip"><use href="#grip"/></svg></div>
              <div class="exp-row">
                <div class="exp-list"><span class="exp-tri"></span><span class="exp-dots">::::</span></div>
                <div class="exp-btns"><span class="pm plus">+</span><span class="pm minus">−</span></div>
              </div>
              <div class="exp-all"><svg class="ic24"><use href="#export"/></svg><span>Export All</span></div>
            </div>

            <div class="panel p-art">
              <div class="panel-h"><svg class="pchev"><use href="#chevd"/></svg><span>Line Art</span><svg class="grip"><use href="#grip"/></svg></div>
              <div class="art-grid">
                <span class="lbl">Usage</span><span class="select">Include<svg class="chev"><use href="#chevd"/></svg></span>
                <span></span><label class="cb"><span class="box"></span>Collection Mask</label>
                <span class="lbl dimtxt">Masks</span>
                <div class="masks"><i></i><i></i><i></i><i></i><i></i><i></i><i></i><i></i></div>
                <span class="lbl isect-l">Intersection...</span>
                <span class="isect"><span class="box"></span><span class="isect-f">0</span></span>
              </div>
            </div>
          </div>
        </div>
      </section>
    </div>
  </div>

  <footer class="statusbar">
    <svg class="mouse"><use href="#mouseL"/></svg>
    <svg class="mouse"><use href="#mouseM"/></svg>
    <svg class="mouse"><use href="#mouseR"/></svg>
    <svg class="ic24 push"><use href="#globeoff"/></svg>
    <span class="version">4.2.2</span>
  </footer>
</div>
</body>
</html>
```
FILE: styles.css
```css
* { box-sizing: border-box; }
html, body { margin: 0; padding: 0; background: #181818; }
body { font-family: "Inter", "Liberation Sans", sans-serif; font-size: 19px; line-height: 1; color: #d8d8d8; }
.defs { position: absolute; width: 0; height: 0; }
svg { display: block; flex: none; }

.app { width: 2487px; height: 1540px; display: flex; flex-direction: column; overflow: hidden; background: #181818; }

.ic18 { width: 18px; height: 18px; }
.ic22 { width: 22px; height: 22px; }
.ic24 { width: 24px; height: 24px; }
.ic26 { width: 26px; height: 26px; }
.ic28 { width: 28px; height: 28px; }
.ic30 { width: 30px; height: 30px; }
.chev { width: 14px; height: 14px; color: #d0d0d0; }

.ml2 { margin-left: 2px; }
.ml8 { margin-left: 8.5px; }
.ml9 { margin-left: 9px; }
.ml10 { margin-left: 10px; }
.ml11 { margin-left: 11px; }
.ml15 { margin-left: 15px; }
.ml26 { margin-left: 26px; }
.ml401 { margin-left: 401px; }
.mt8 { margin-top: 8px; }
.push { margin-left: auto; }
.gap0 { gap: 0; }
.w28 { width: 28px; }
.w32 { width: 32px; }
.w33 { width: 33px; }
.w34 { width: 34px; }
.w35 { width: 35px; }
.w52 { width: 52px; }
.w53 { width: 53px; }
.w65 { width: 65px; }
.w67 { width: 67px; }
.w86 { width: 86px; }
.w102 { width: 102px; }
.w110 { width: 110px; }
.w120 { width: 120px; }
.w126 { width: 126px; }
.w131 { width: 131px; }
.w145 { width: 145px; }
.w152 { width: 152px; }
.w162 { width: 162px; }
.bl { border-left: 1px solid #3d3d3d; }

/* top bar */
.topbar { height: 45px; flex: none; display: flex; align-items: flex-start; background: #181818; }
.logo { width: 47.25px; height: 40px; display: flex; align-items: center; justify-content: center; padding-left: 8px; }
.menus { display: flex; height: 40px; align-items: center; }
.menu { padding: 0 13.1px; color: #dcdcdc; white-space: nowrap; }
.menus .menu { padding: 0 12.75px; }
.tabs { display: flex; gap: 2px; margin: 7px 0 0 28px; height: 35px; }
.tab { height: 35px; padding: 0 15.6px; display: flex; align-items: center; color: #9f9f9f; background: #1f1f1f; border-radius: 7px 7px 0 0; white-space: nowrap; }
.tab.active { background: #3d3d3d; color: #e6e6e6; }
.tab-add { font-size: 26px; font-weight: 300; padding: 0 8px; background: #1c1c1c; }
.datablock { height: 33px; margin-top: 3px; display: flex; align-items: center; background: #262626; border: 1px solid #343434; border-radius: 7px; overflow: hidden; }
.scene-block { width: 291px; margin-left: auto; }
.layer-block { width: 257px; margin-left: 9px; margin-right: 6px; }
.db-icon { width: 53px; height: 100%; display: flex; align-items: center; justify-content: center; border-right: 1px solid #3d3d3d; background: #2a2a2a; flex: none; }
.db-name { padding-left: 14px; color: #e8e8e8; flex: 1; }
.db-pin { margin-right: 8px; }
.db-copy { width: 34px; height: 100%; background: #555; display: flex; align-items: center; justify-content: center; flex: none; }
.db-x { width: 34px; height: 100%; background: #3a3a3a; display: flex; align-items: center; justify-content: center; flex: none; }

.workspace { flex: 1; min-height: 0; display: flex; gap: 4px; }
.left-col { width: 2060px; flex: none; display: flex; flex-direction: column; gap: 2px; }
.right-col { flex: 1; min-width: 0; display: flex; flex-direction: column; gap: 3px; }

/* viewport */
.viewport { position: relative; height: 1345px; flex: none; background: #3f3f3f; border-radius: 8px 8px 0 0; overflow: hidden; }
.canvas { position: absolute; left: 0; top: 0; width: 2060px; height: 1345px; }
.gz-t { font-family: "Inter", sans-serif; font-size: 17px; font-weight: 700; fill: #1f2a38; text-anchor: middle; }

.vp-header { position: relative; height: 45px; display: flex; align-items: flex-start; padding: 5px 13px 0 14px; background: #3d3d3d; }
.hbtn { height: 33px; display: flex; align-items: center; justify-content: center; gap: 3px; background: #282828; border: 1px solid #343434; border-radius: 7px; color: #e0e0e0; flex: none; }
.hbtn-label { flex: 1; padding-left: 8px; white-space: nowrap; }
.w162 .hbtn-label, .w131 .hbtn-label { padding-left: 7px; }
.w110 .hbtn-label { padding-left: 4px; }
.w162, .w131, .w110 { padding: 0 8px; }
.seg { display: flex; height: 33px; border-radius: 7px; overflow: hidden; flex: none; background: #545454; }
.seg-item { height: 33px; display: flex; align-items: center; justify-content: center; background: #545454; border-left: 1px solid #3f3f3f; }
.seg-item:first-child { border-left: 0; }
.seg-item.on { background: #4772b3; }
.seg-item.dark { background: #282828; }
.seg-item.txt { color: #e6e6e6; }
.hmenu { display: flex; align-items: center; height: 33px; }
.split { display: flex; height: 33px; border-radius: 7px; overflow: hidden; background: #282828; flex: none; }
.split-on { background: #4772b3; display: flex; align-items: center; justify-content: center; height: 100%; flex: none; }
.split-grey { background: #545454; display: flex; align-items: center; justify-content: center; height: 100%; flex: none; }
.split-rest { flex: 1; min-width: 0; display: flex; align-items: center; justify-content: center; gap: 2px; height: 100%; }
.split-rest.dim { opacity: .55; }

.vp-tool { position: relative; height: 42px; display: flex; justify-content: space-between; margin-top: -1px; }
.tool-left { width: 253px; height: 43px; padding: 2px 0 0 25px; display: flex; align-items: flex-start; background: #3d3d3d; border-radius: 0 0 8px 0; }
.tool-active { width: 35px; height: 35px; display: flex; align-items: center; justify-content: center; border: 2px dashed #f0a42a; }
.tool-left .seg { margin-top: 2px; }
.tool-right { width: 306px; height: 43px; padding: 4px 12px 0 17px; display: flex; align-items: flex-start; background: #3d3d3d; border-radius: 0 0 0 8px; }
.symm { margin: 2px 3px 0 0; }
.tool-right .hbtn { justify-content: flex-start; }

.vp-info { position: absolute; left: 17px; top: 106px; display: flex; flex-direction: column; gap: 12px; color: #f0f0f0; text-shadow: 0 1px 2px #000; }
.area-toggle { position: absolute; left: 0; top: 110px; width: 12px; height: 22px; color: #8a8a8a; }

.nav-buttons { position: absolute; left: 1519px; top: 247px; display: flex; flex-direction: column; gap: 5px; }
.nav-btn { width: 48px; height: 48px; border-radius: 50%; background: #2b2b2b; display: flex; align-items: center; justify-content: center; }

.n-panels { position: absolute; left: 1596px; top: 90px; width: 417px; display: flex; flex-direction: column; gap: 3px; }
.n-panel { height: 42px; display: flex; align-items: center; padding: 0 12px 0 13px; background: #414141; border-radius: 7px; color: #d0d0d0; }
.chev-r { width: 18px; height: 18px; color: #c8c8c8; margin-right: 6px; }
.n-title { margin-left: 16px; flex: 1; }
.grip { width: 20px; height: 10px; }

.n-tabs { position: absolute; left: 2027px; top: 87px; bottom: 0; width: 33px; display: flex; flex-direction: column; gap: 8px; padding-top: 8px; background: #1c1c1c; }
.n-tab { width: 31px; writing-mode: vertical-rl; display: flex; align-items: center; justify-content: center; background: #2c2c2c; border-radius: 0 7px 7px 0; color: #d0d0d0; border: 1px solid #383838; border-left: 0; }
.n-tab.active { background: #3f3f3f; color: #f0f0f0; }
.h67 { height: 67px; }
.h64 { height: 64px; }
.h68 { height: 68px; }
.h119 { height: 119px; }

/* timeline */
.timeline { position: relative; flex: 1; min-height: 0; display: flex; flex-direction: column; border-radius: 8px 8px 0 0; overflow: hidden; background: #1d1d1d; }
.tl-header { height: 43px; flex: none; display: flex; align-items: center; padding: 0 13px 0 14px; background: #303030; }
.tl-drop { height: 100%; display: flex; align-items: center; justify-content: space-between; padding: 0 8px 0 13px; }
.tl-drop.bl { padding-left: 11px; }
.frame { width: 126px; height: 33px; display: flex; align-items: center; justify-content: center; background: #545454; border-radius: 7px; color: #e6e6e6; }
.range { display: flex; height: 33px; background: #545454; border-radius: 7px; overflow: hidden; color: #e6e6e6; }
.range-ic { width: 33px; display: flex; align-items: center; justify-content: center; border-right: 1px solid #3f3f3f; }
.range-f { display: flex; align-items: center; justify-content: space-between; padding: 0 17px 0 28px; }
.w145.range-f { padding-right: 24px; }
.ruler { position: relative; height: 41px; flex: none; display: flex; padding-left: 145.35px; padding-top: 12px; background: #1d1d1d; }
.rn { width: 153.3px; text-align: center; color: #a8a8a8; flex: none; }
.playhead { position: absolute; left: 56px; top: 5px; width: 41px; height: 31px; display: flex; align-items: center; justify-content: center; background: #4772b3; border-radius: 6px; color: #f0f0f0; z-index: 2; }
.playhead::after { content: ""; position: absolute; left: 20px; top: 31px; width: 1.500px; height: 31px; background: #4772b3; }
.tracks { flex: 1; min-height: 0; padding: 7px 15px 3px; background-color: #1d1d1d; background-image: repeating-linear-gradient(90deg, transparent 0 68px, #3b3b3b 68px 69px, transparent 69px 76.65px), linear-gradient(#2b2b2b, #2b2b2b); background-size: 1985px 100%; background-repeat: no-repeat; }
.scrollbar { position: relative; height: 16px; background: #555; border-radius: 8px; width: 2031px; border-top: 1px solid #4a4a4a; }
.scrollbar::before, .scrollbar::after { content: ""; position: absolute; top: 1px; width: 11px; height: 13px; border-radius: 50%; background: #3a3a3a; }
.scrollbar::before { left: 2px; }
.scrollbar::after { right: 2px; }
.tl-toggle-l { position: absolute; left: 0; top: 60px; width: 10px; height: 20px; color: #808080; }

/* outliner */
.outliner { height: 467px; flex: none; background: #2b2b2b; border-radius: 8px 8px 0 0; overflow: hidden; display: flex; flex-direction: column; }
.ol-header { height: 43px; flex: none; display: flex; align-items: center; padding: 0 0 0 13px; background: #303030; }
.search { height: 33px; display: flex; align-items: center; gap: 9px; padding: 0 6px; background: #1d1d1d; border: 1px solid #343434; border-radius: 7px; color: #777; flex: none; }
.ol-search { width: 200px; margin-left: 27px; }
.ol-filter { width: 50px; margin-left: 27px; justify-content: flex-start; padding-left: 3px; }
.ol-rows { flex: 1; min-height: 0; overflow: hidden; }
.row { position: relative; height: 34px; display: flex; align-items: center; background: #2b2b2b; padding-right: 8px; color: #c8c8c8; }
.row.odd { background: #282828; }
.dot { width: 34px; flex: none; position: relative; height: 34px; }
.dot::after { content: ""; position: absolute; left: 14px; top: 14px; width: 7px; height: 7px; border-radius: 50%; background: #dcdcdc; }
.child::before { content: ""; position: absolute; left: 50px; top: 0; bottom: 0; width: 1px; background: #555; }
.twist { width: 20px; height: 20px; margin-left: 42px; color: #bdbdbd; }
.oic { width: 30px; height: 26px; margin-left: 8px; }
.oic-hl { width: 32px; height: 30px; margin-left: 7px; margin-right: -1px; background: #555; border-radius: 7px; display: flex; align-items: center; justify-content: center; border: 1px solid #6a6a6a; }
.oic-hl .oic { margin-left: 0; width: 24px; height: 24px; }
.name { margin-left: 8px; white-space: nowrap; }
.dic { width: 26px; height: 26px; margin-left: 39px; color: #12a586; }
.faded { opacity: .45; }
.sub { position: relative; margin-left: 42px; width: 30px; height: 26px; }
.sub .dic { margin-left: 0; }
.sub-n { position: absolute; left: 15px; top: 13px; font-size: 15px; color: #e0e0e0; text-shadow: 0 0 3px #000, 0 0 2px #000; }
.dic-hl { margin-left: 35px; width: 34px; height: 34px; background: #4d4d4d; border-radius: 8px; display: flex; align-items: center; justify-content: center; }
.dic-hl .dic { margin-left: 0; }
.rctl { margin-left: auto; display: flex; align-items: center; }
.ctl { width: 34px; height: 24px; }
.olcheck { width: 18px; height: 18px; margin-right: 8px; background: #d8d8d8; border-radius: 3px; color: #222; display: flex; align-items: center; justify-content: center; }
.olcheck svg { width: 16px; height: 16px; }

/* properties */
.properties { flex: 1; min-height: 0; display: flex; flex-direction: column; background: #303030; border-radius: 8px 8px 0 0; overflow: hidden; }
.pr-header { height: 42px; flex: none; display: flex; align-items: center; padding: 0 5px 0 13px; }
.pr-search { width: 199px; margin-left: 44px; }
.pr-opt { width: 33px; margin-left: auto; }
.pr-body { flex: 1; min-height: 0; display: flex; }
.pr-nav { width: 48px; flex: none; display: flex; flex-direction: column; padding-top: 14px; background: #1d1d1d; }
.pn { height: 47px; flex: none; display: flex; align-items: center; justify-content: center; padding-left: 2px; }
.pn.gap14 { margin-top: 14px; }
.pn.on { background: #303030; border-radius: 8px 0 0 8px; margin-left: 3px; padding-left: 0; }
.pn-data { color: #12a586; }
.pr-main { flex: 1; min-width: 0; overflow: hidden; padding: 0 6px 0 13px; }
.pr-title { height: 66px; padding: 0 4px 2px 5px; display: flex; align-items: center; color: #e6e6e6; }
.pr-name { margin-left: 16px; flex: 1; }
.panel { background: #3d3d3d; border-radius: 8px; margin-bottom: 3px; padding: 0 15px; }
.panel-h { height: 44px; display: flex; align-items: center; color: #d8d8d8; }
.panel-h span { flex: 1; }
.pchev { width: 17px; height: 17px; margin: 0 7px 0 -2px; color: #b8b8b8; }
.panel-h .grip { width: 20px; height: 10px; margin-top: -4px; }
.p-restrict { height: 214px; }
.p-inst { height: 172px; }
.p-exp { height: 246px; }
.p-art { height: 260px; }
.cb-col { padding: 12px 0 0 139px; }
.cb { height: 34px; display: flex; align-items: center; gap: 6px; color: #d8d8d8; white-space: nowrap; }
.box { width: 22px; height: 22px; border-radius: 5px; background: #545454; color: #fff; flex: none; display: flex; align-items: center; justify-content: center; }
.box.on { background: #4772b3; }
.box svg { width: 18px; height: 18px; }

.inst-grid { display: grid; grid-template-columns: 139px 154px 33px; grid-auto-rows: 33px; row-gap: 1px; margin-top: 13px; }
.lbl { display: flex; align-items: center; justify-content: flex-end; color: #d0d0d0; white-space: nowrap; }
.inst-grid .lbl { padding-right: 17px; }
.num { background: #545454; display: flex; align-items: center; justify-content: center; color: #e0e0e0; }
.num.first { border-radius: 7px 0 0 0; }
.num.last { border-radius: 0 0 7px 7px; }
.num-drop { background: #282828; border-radius: 0 7px 7px 0; display: flex; align-items: center; justify-content: center; }

.exp-row { display: flex; margin-top: 12px; gap: 16px; }
.exp-list { position: relative; width: 278px; height: 133px; background: #2a2a2a; border-radius: 7px; }
.exp-tri { position: absolute; left: 19px; bottom: 14px; border-left: 10px solid #999; border-top: 5px solid transparent; border-bottom: 5px solid transparent; }
.exp-dots { position: absolute; left: 147px; bottom: 13px; color: #b0b0b0; font-size: 15px; letter-spacing: 1px; }
.exp-btns { width: 32px; display: flex; flex-direction: column; gap: 1px; }
.pm { height: 32px; padding-bottom: 2px; display: flex; align-items: center; justify-content: center; font-size: 28px; font-weight: 300; }
.plus { background: #282828; border-radius: 7px 7px 0 0; color: #f0f0f0; }
.minus { background: #4a4a4a; border-radius: 0 0 7px 7px; color: #777; }
.exp-all { position: relative; margin-top: 10px; height: 33px; padding-left: 30px; background: #4a4a4a; border-radius: 7px; display: flex; align-items: center; justify-content: center; color: #858585; }
.exp-all svg { position: absolute; left: 7px; top: 5px; }

.art-grid { display: grid; grid-template-columns: 122px 187px; column-gap: 17px; margin-top: 13px; grid-template-rows: 32px 43px 76px 43px; }
.select { background: #282828; border-radius: 7px; display: flex; align-items: center; justify-content: space-between; padding: 0 8px 0 13px; color: #e0e0e0; }
.art-grid .cb { margin-top: 9px; }
.masks { height: 67px; margin-top: 9px; display: grid; grid-template-columns: repeat(4, 1fr); grid-template-rows: 1fr 1fr; gap: 1px; border-radius: 7px; overflow: hidden; }
.masks i { background: #4a4a4a; }
.lbl.dimtxt { color: #7c7c7c; height: 33px; margin-top: 9px; }
.lbl.isect-l { height: 33px; margin-top: 10px; }
.isect { display: flex; align-items: flex-start; gap: 12px; padding-top: 14px; }
.isect .box { background: #4a4a4a; }
.isect-f { flex: 1; height: 33px; margin-top: -4px; background: #4a4a4a; border-radius: 7px; text-align: center; padding-top: 7px; color: #858585; }

/* status */
.statusbar { height: 38px; flex: none; display: flex; align-items: center; padding: 0 14px 0 19px; background: #181818; }
.mouse { width: 21px; height: 26px; margin-right: 332px; }
.version { margin-left: 9px; padding-left: 7px; border-left: 1px solid #777; color: #999; line-height: 22px; }
```
